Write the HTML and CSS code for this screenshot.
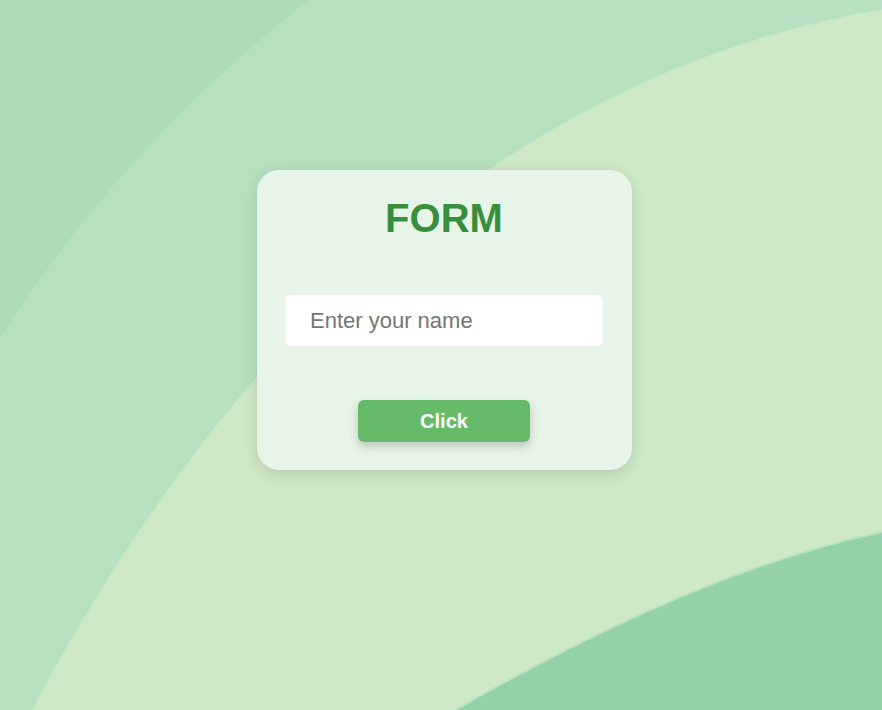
FILE: index.html
```html
<!DOCTYPE html>
<html lang="en">
<head>
<meta charset="utf-8">
<title>Form</title>
<link rel="stylesheet" href="styles.css">
</head>
<body>
<svg class="bg" viewBox="0 0 882 710" preserveAspectRatio="none" aria-hidden="true">
  <rect x="0" y="0" width="882" height="710" fill="#acdcb8"/>
  <path d="M310,0 Q120,150 0,340 L0,710 L882,710 L882,0 Z" fill="#b6e0c0"/>
  <path d="M310,0 Q120,150 0,340" fill="none" stroke="#b4e2c0" stroke-width="2"/>
  <path d="M882,10 C540,70 250,300 33,710 L882,710 Z" fill="#cfe8c7"/>
  <path d="M882,10 C540,70 250,300 33,710" fill="none" stroke="#c8e9c8" stroke-width="2"/>
  <path d="M882,532 Q700,570 455,710 L882,710 Z" fill="#94d1aa"/>
  <path d="M882,532 Q700,570 455,710" fill="none" stroke="#b8e4c0" stroke-width="2"/>
</svg>
<main class="page">
  <form class="card" onsubmit="return false">
    <h1 class="title">FORM</h1>
    <input class="name-input" type="text" placeholder="Enter your name">
    <button class="btn" type="submit">Click</button>
  </form>
</main>
</body>
</html>
```

FILE: styles.css
```css
html, body {
  margin: 0;
  padding: 0;
  height: 100%;
}

body {
  font-family: "Liberation Sans", Arial, sans-serif;
  overflow: hidden;
  position: relative;
  background: #cfe8c7;
}

.bg {
  position: absolute;
  left: 0;
  top: 0;
  width: 100%;
  height: 100%;
  z-index: 0;
}

.page {
  position: relative;
  z-index: 1;
  display: flex;
  justify-content: center;
  padding: 170px 0 0 6px;
}

.card {
  width: 375px;
  height: 300px;
  box-sizing: border-box;
  background: #e7f5e9;
  border-radius: 22px;
  box-shadow: 0 4px 15px rgba(0, 0, 0, 0.13);
  display: flex;
  flex-direction: column;
  align-items: center;
  padding-top: 25px;
}

.title {
  margin: 0;
  font-size: 40px;
  line-height: 46px;
  font-weight: bold;
  color: #388e3c;
}

.name-input {
  margin-top: 54px;
  width: 318px;
  height: 51px;
  box-sizing: border-box;
  border: none;
  border-radius: 6px;
  background: #ffffff;
  padding: 0 0 0 25px;
  font-family: "Liberation Sans", Arial, sans-serif;
  font-size: 22px;
  color: #333;
  outline: none;
}

.name-input::placeholder {
  color: #757575;
}

.btn {
  margin-top: 54px;
  width: 172px;
  height: 42px;
  border: none;
  border-radius: 6px;
  background: #66bb6a;
  color: #ffffff;
  font-family: "Liberation Sans", Arial, sans-serif;
  font-size: 20px;
  font-weight: bold;
  box-shadow: 0 4px 10px rgba(0, 0, 0, 0.2);
  cursor: pointer;
}
```
